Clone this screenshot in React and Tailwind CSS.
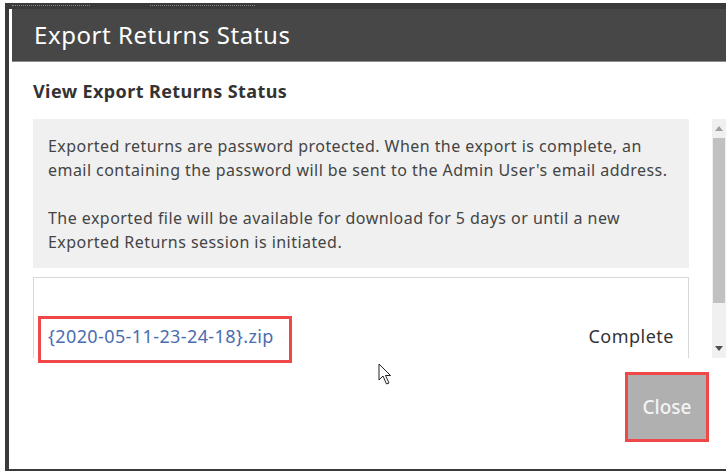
import React from "react";

function Cursor() {
  return (
    <svg width="14" height="24" viewBox="0 0 14 24" className="absolute left-[378px] top-[363px]">
      <path
        d="M1 1 L1 17 L5 13 L8.5 21 L11 20 L7.5 12.5 L12.5 12.5 Z"
        fill="#ffffff"
        stroke="#222222"
        strokeWidth="1"
        strokeLinejoin="round"
      />
    </svg>
  );
}

function Scrollbar() {
  return (
    <div className="flex h-full w-[14px] flex-col bg-[#f0f0f0]">
      <div className="flex h-[19px] items-center justify-center">
        <svg width="8" height="5" viewBox="0 0 8 5">
          <path d="M0 5 L4 0 L8 5 Z" fill="#a0a0a0" />
        </svg>
      </div>
      <div className="mx-[1px] h-[165px] bg-[#c1c1c1]" />
      <div className="flex-1" />
      <div className="flex h-[19px] items-center justify-center">
        <svg width="8" height="5" viewBox="0 0 8 5">
          <path d="M0 0 L4 5 L8 0 Z" fill="#505050" />
        </svg>
      </div>
    </div>
  );
}

export default function App() {
  const font = { fontFamily: '"Noto Sans", "Open Sans", sans-serif' };
  return (
    <div className="relative h-[471px] w-[726px] overflow-hidden bg-white" style={font}>
      <div className="pl-[5px] pt-[3px]">
        <div className="h-[468px] bg-[#3a3a3a] pb-[2px] pl-[4px]">
          {/* strip of the page behind the dialog */}
          <div className="flex h-[6px] items-start gap-[60px] pl-[3px] pt-[2px]">
            <div className="w-[78px] border-t border-dotted border-[#8a8a8a]" />
            <div className="w-[105px] border-t border-dotted border-[#8a8a8a]" />
          </div>
          <div className="flex h-[460px] flex-col bg-white pl-[3px]">
            {/* title bar */}
            <div className="flex h-[53px] items-center border-b border-[#8c8c8c] bg-[#474747] pl-[22px]">
              <span className="text-[24px] tracking-[0.55px] text-white">Export Returns Status</span>
            </div>

            <div className="flex flex-1 flex-col pl-[21px]">
              <h2 className="mt-[17px] h-[24px] text-[18px] font-bold leading-[24px] tracking-[0.4px] text-[#333333]">
                View Export Returns Status
              </h2>

              {/* scrolling content */}
              <div className="mt-[16px] flex h-[239px] overflow-hidden">
                <div className="w-[656px] shrink-0">
                  <div className="h-[149px] bg-[#f0f0f0] px-[15px] pt-[16px] text-[16px] leading-[23.5px] tracking-[0.45px] text-[#444444]">
                    <p>
                      Exported returns are password protected. When the export is complete, an email containing the
                      password will be sent to the Admin User's email address.
                    </p>
                    <p className="mt-[25px]">
                      The exported file will be available for download for 5 days or until a new Exported Returns
                      session is initiated.
                    </p>
                  </div>
                  <div className="mt-[9px] h-[120px] border border-[#d8d8d8]">
                    <div className="mt-[45px] flex items-center justify-between pl-[14px] pr-[14px]">
                      <span className="text-[18px] tracking-[0.4px] text-[#4a6db0]">
                        {"{2020-05-11-23-24-18}.zip"}
                      </span>
                      <span className="text-[18px] tracking-[0.5px] text-[#333333]">Complete</span>
                    </div>
                  </div>
                </div>
                <div className="ml-[23px]">
                  <Scrollbar />
                </div>
              </div>

              {/* footer */}
              <div className="flex justify-end pr-[17px] pt-[14px]">
                <button className="h-[70px] w-[84px] border-[3px] border-[#f04848] bg-[#b0b0b0] text-[19px] font-medium text-[#f4f4f4]">
                  Close
                </button>
              </div>
            </div>
          </div>
        </div>
      </div>
      {/* highlight frame around the download link */}
      <div className="absolute left-[38px] top-[316px] h-[47px] w-[254px] border-[3px] border-[#f04848]" />
      <Cursor />
    </div>
  );
}
